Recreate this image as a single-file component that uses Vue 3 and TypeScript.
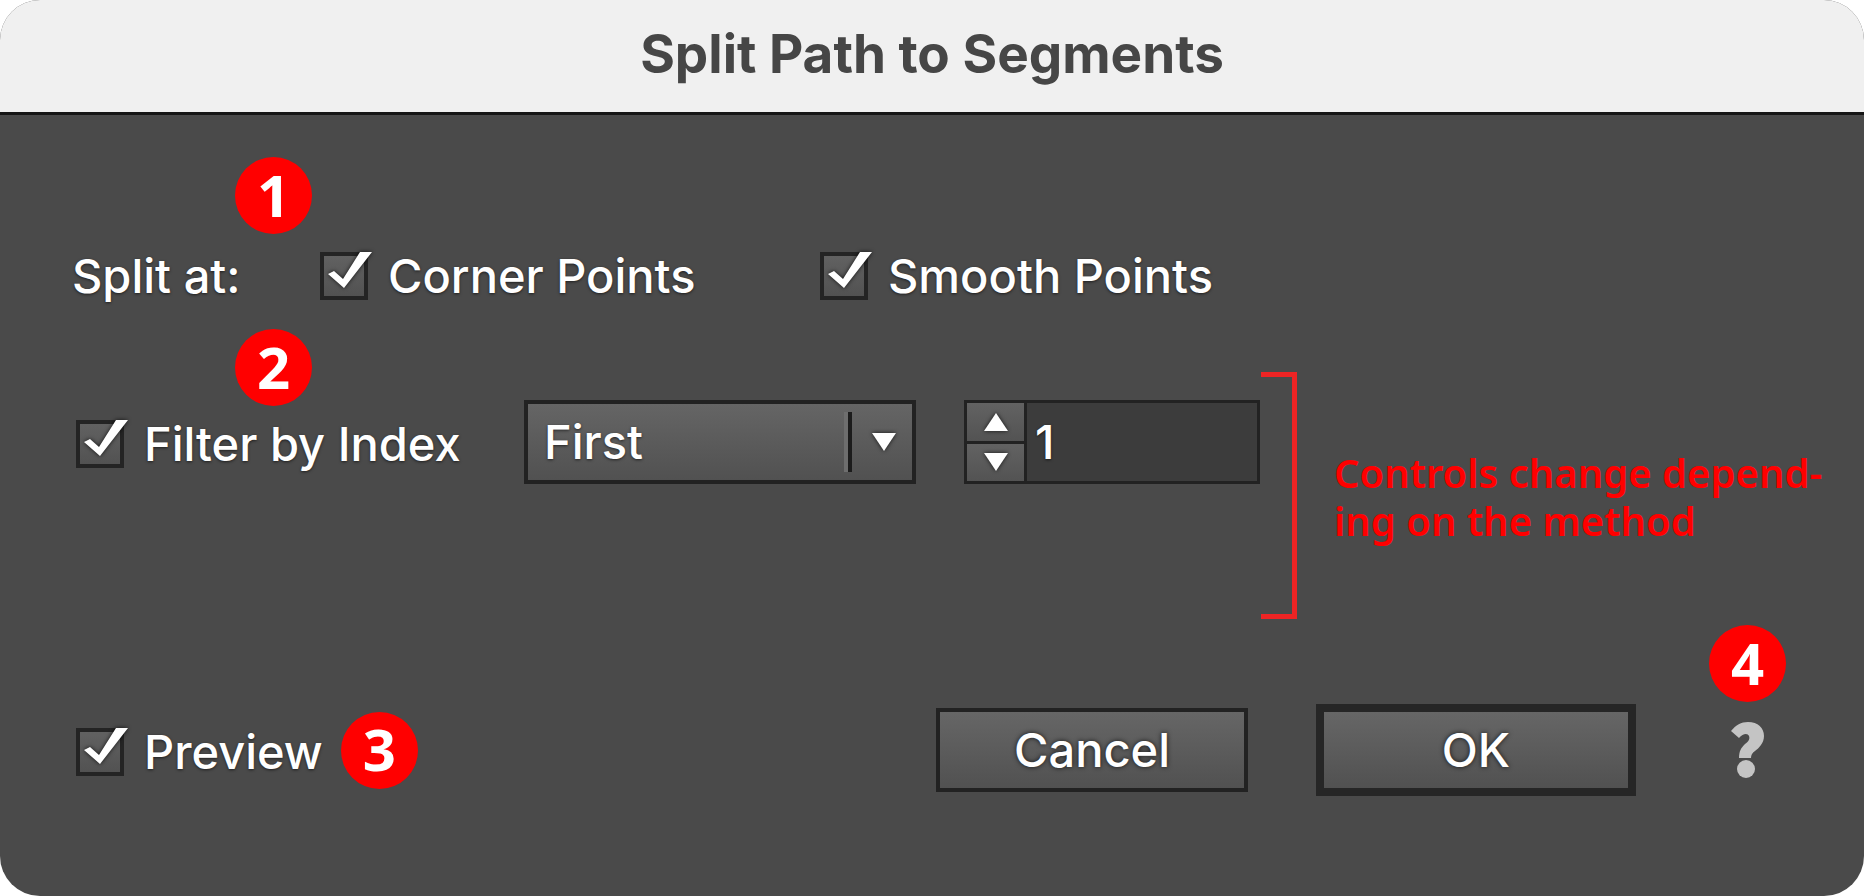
<script setup lang="ts">
import { ref } from 'vue'

const cornerPoints = ref(true)
const smoothPoints = ref(true)
const filterByIndex = ref(true)
const preview = ref(true)
const method = ref('First')
const methods: string[] = ['First', 'Last', 'Every', 'Range']
const count = ref(1)

function step(delta: number): void {
  count.value = Math.max(1, Number(count.value) + delta)
}
</script>

<template>
  <main class="dialog">
    <header class="titlebar">
      <h1>Split Path to Segments</h1>
    </header>

    <form class="body" @submit.prevent>
      <div class="row split">
        <span class="caption">Split at:</span>
        <span class="badge above">1</span>
        <label class="check corner">
          <span class="box">
            <input v-model="cornerPoints" type="checkbox" />
            <svg v-if="cornerPoints" viewBox="0 0 56 48"><path d="M8 22 14 19 23 27 40 0H52L24 36Z" /></svg>
          </span>
          Corner Points
        </label>
        <label class="check">
          <span class="box">
            <input v-model="smoothPoints" type="checkbox" />
            <svg v-if="smoothPoints" viewBox="0 0 56 48"><path d="M8 22 14 19 23 27 40 0H52L24 36Z" /></svg>
          </span>
          Smooth Points
        </label>
      </div>

      <div class="row filter">
        <span class="badge above">2</span>
        <label class="check index">
          <span class="box">
            <input v-model="filterByIndex" type="checkbox" />
            <svg v-if="filterByIndex" viewBox="0 0 56 48"><path d="M8 22 14 19 23 27 40 0H52L24 36Z" /></svg>
          </span>
          Filter by Index
        </label>
        <div class="dropdown">
          <select v-model="method" aria-label="Filter method">
            <option v-for="m in methods" :key="m">{{ m }}</option>
          </select>
          <span class="divider"></span>
          <svg class="arrow" viewBox="0 0 24 18"><path d="M0 0H24L12 18Z" /></svg>
        </div>
        <div class="stepper">
          <div class="steps">
            <button type="button" aria-label="Increase" @click="step(1)">
              <svg class="arrow" viewBox="0 0 24 18"><path d="M12 0 24 18H0Z" /></svg>
            </button>
            <button type="button" aria-label="Decrease" @click="step(-1)">
              <svg class="arrow" viewBox="0 0 24 18"><path d="M0 0H24L12 18Z" /></svg>
            </button>
          </div>
          <input v-model="count" type="text" inputmode="numeric" aria-label="Index count" />
        </div>
        <div class="bracket"></div>
        <p class="note">Controls change depend-<br />ing on the method</p>
      </div>

      <footer class="row actions">
        <label class="check">
          <span class="box">
            <input v-model="preview" type="checkbox" />
            <svg v-if="preview" viewBox="0 0 56 48"><path d="M8 22 14 19 23 27 40 0H52L24 36Z" /></svg>
          </span>
          Preview
        </label>
        <span class="badge">3</span>
        <button type="button" class="btn cancel">Cancel</button>
        <button type="submit" class="btn ok">OK</button>
        <div class="help">
          <span class="badge top">4</span>
          <button type="button" aria-label="Help">
            <svg viewBox="0 0 34 56">
              <path d="M0 9C5 3 10 0 17 0C27 0 33 6 33 14C33 21 28 26 24 29C21 31 20 33 20 36H8C8 29 10 26 14 22C18 19 19 17 18 14C17 11 12 11 8 16Z" />
              <circle cx="15" cy="47" r="9" />
            </svg>
          </button>
        </div>
      </footer>
    </form>
  </main>
</template>

<style>
body {
  margin: 0;
  background: #fff;
}
</style>

<style scoped>
* {
  box-sizing: border-box;
}
.dialog {
  display: flex;
  flex-direction: column;
  min-height: 100vh;
  border-radius: 40px;
  overflow: hidden;
  background: #4a4a4a;
  color: #fff;
  font: 500 47px/60px Inter, "Liberation Sans", sans-serif;
}
.titlebar {
  padding: 24px 0 28px;
  border-bottom: 3px solid #161616;
  background: #f0f0f0;
  color: #464646;
  text-align: center;
}
h1 {
  margin: 0;
  font-size: 53px;
  font-weight: 700;
  line-height: 60px;
}
.body {
  display: flex;
  flex: 1;
  flex-direction: column;
  padding: 119px 40px 100px 76px;
  text-shadow: 0 1px 3px rgba(0, 0, 0, 0.6);
}
.row {
  position: relative;
  display: flex;
  align-items: center;
}
.split {
  height: 84px;
}
.filter {
  align-items: flex-start;
  height: 247px;
  margin-top: 54px;
  padding-top: 28px;
}
.actions {
  height: 92px;
  margin-top: auto;
}
.caption {
  width: 244px;
  margin-left: -4px;
  margin-right: 4px;
  white-space: nowrap;
}
.check {
  display: flex;
  align-items: center;
  gap: 20px;
  white-space: nowrap;
}
.filter .check,
.actions .check {
  padding-top: 3px;
}
.corner {
  width: 500px;
}
.index {
  width: 448px;
  height: 84px;
}
.box {
  position: relative;
  width: 48px;
  height: 48px;
}
.box input {
  display: block;
  width: 48px;
  height: 48px;
  margin: 0;
  appearance: none;
  border: 4px solid #242424;
  background: linear-gradient(#616161, #525252);
}
.box svg {
  position: absolute;
  top: 0;
  left: 0;
  width: 56px;
  height: 48px;
  overflow: visible;
  pointer-events: none;
}
svg {
  fill: #fff;
  filter: drop-shadow(0 0 2px rgba(0, 0, 0, 0.8));
}
.arrow {
  display: block;
  width: 24px;
  height: 18px;
}
.badge {
  display: flex;
  flex: none;
  align-items: center;
  justify-content: center;
  width: 77px;
  height: 77px;
  padding-bottom: 2px;
  border-radius: 50%;
  background: #f00;
  font: 700 58px/76px "Noto Sans", sans-serif;
  text-shadow: none;
}
.above {
  position: absolute;
  left: 159px;
}
.split .above {
  top: -77px;
}
.filter .above {
  top: -43px;
}
.dropdown {
  position: relative;
  width: 392px;
  height: 84px;
}
select {
  width: 100%;
  height: 100%;
  padding: 0 90px 0 16px;
  appearance: none;
  border: 4px solid #222;
  border-radius: 0;
  background: linear-gradient(#656565, #515151);
  color: inherit;
  font: inherit;
  text-shadow: inherit;
}
.divider {
  position: absolute;
  top: 12px;
  right: 64px;
  width: 8px;
  height: 60px;
  border-left: 4px solid #6e6e6e;
  border-right: 4px solid #1c1c1c;
}
.dropdown .arrow {
  position: absolute;
  top: 33px;
  right: 20px;
  pointer-events: none;
}
.stepper {
  display: flex;
  width: 296px;
  height: 84px;
  margin-left: 48px;
  border: 3px solid #222;
  background: #3c3c3c;
}
.steps {
  display: grid;
  flex: none;
  grid-template-rows: 1fr 1fr;
  gap: 3px;
  width: 60px;
  border-right: 3px solid #222;
  background: #222;
}
.steps button {
  display: flex;
  align-items: center;
  justify-content: center;
  padding: 0;
  border: 0;
  background: linear-gradient(#626262, #535353);
}
.stepper input {
  width: 100%;
  min-width: 0;
  padding: 0 8px;
  border: 0;
  background: none;
  color: inherit;
  font: inherit;
  text-shadow: inherit;
}
.bracket {
  flex: none;
  width: 36px;
  height: 247px;
  margin: -28px 0 0 1px;
  border: 5px solid #ee2424;
  border-left: 0;
}
.note {
  margin: 49px 0 0 37px;
  color: #f00;
  font: 600 40px/48px "Noto Sans", sans-serif;
  text-shadow: none;
  white-space: nowrap;
}
.actions > .badge {
  margin-left: 18px;
}
.btn {
  height: 84px;
  padding: 0;
  border: 4px solid #222;
  background: linear-gradient(#666, #515151);
  color: inherit;
  font: inherit;
  text-shadow: 0 0 5px rgba(0, 0, 0, 0.8);
}
.cancel {
  width: 312px;
  margin-left: auto;
}
.ok {
  width: 320px;
  height: 92px;
  margin-left: 68px;
  border-width: 8px;
  border-color: #262626;
}
.help {
  position: relative;
  display: flex;
  justify-content: center;
  width: 78px;
  margin: 0 37px 0 73px;
}
.help button {
  padding: 0;
  border: 0;
  background: none;
}
.help button svg {
  display: block;
  width: 34px;
  height: 56px;
  fill: #c4c4c4;
  filter: none;
}
.top {
  position: absolute;
  bottom: 76px;
  left: 0;
}
</style>
